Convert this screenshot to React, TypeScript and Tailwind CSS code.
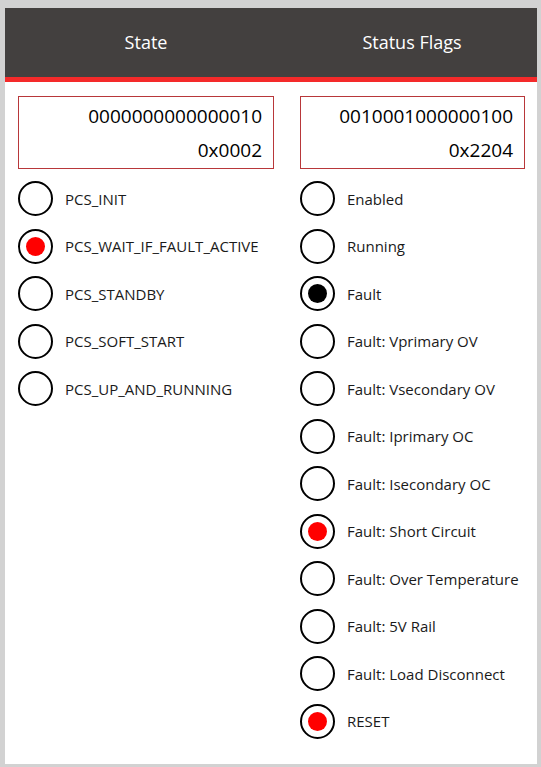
const stateItems = [
  { label: "PCS_INIT", on: false },
  { label: "PCS_WAIT_IF_FAULT_ACTIVE", on: true },
  { label: "PCS_STANDBY", on: false },
  { label: "PCS_SOFT_START", on: false },
  { label: "PCS_UP_AND_RUNNING", on: false },
];

const flagItems: { label: string; dot?: "red" | "black" }[] = [
  { label: "Enabled" },
  { label: "Running" },
  { label: "Fault", dot: "black" },
  { label: "Fault: Vprimary OV" },
  { label: "Fault: Vsecondary OV" },
  { label: "Fault: Iprimary OC" },
  { label: "Fault: Isecondary OC" },
  { label: "Fault: Short Circuit", dot: "red" },
  { label: "Fault: Over Temperature" },
  { label: "Fault: 5V Rail" },
  { label: "Fault: Load Disconnect" },
  { label: "RESET", dot: "red" },
];

const Radio = ({ dot }: { dot?: "red" | "black" }) => (
  <div className="w-[35px] h-[35px] rounded-full border-2 border-black flex items-center justify-center shrink-0 bg-white">
    {dot === "red" && <div className="w-[19px] h-[19px] rounded-full bg-[#ff0000]" />}
    {dot === "black" && <div className="w-[19px] h-[19px] rounded-full bg-black" />}
  </div>
);

const ValueBox = ({ bin, hex }: { bin: string; hex: string }) => (
  <div className="border border-[#b8373a] h-[73px] flex flex-col justify-between items-end pr-[11px] pt-[6px] pb-[5px] text-[19px] leading-[26px] text-black">
    <span>{bin}</span>
    <span>{hex}</span>
  </div>
);

const Row = ({ label, dot }: { label: string; dot?: "red" | "black" }) => (
  <div className="h-[47.5px] flex items-center gap-[12px]">
    <Radio dot={dot} />
    <span className="text-[15px] text-[#1a1a1a]">{label}</span>
  </div>
);

export default function App() {
  return (
    <div
      className="w-[541px] h-[767px] bg-[#d2d2d2] pl-[5px] pt-[8px] pr-[4px] pb-[3px]"
      style={{ fontFamily: '"Open Sans", "Noto Sans", sans-serif' }}
    >
      <div className="w-[532px] h-[756px] bg-white flex flex-col">
        {/* header */}
        <div className="h-[69px] bg-[#43403f] grid grid-cols-[282px_250px] items-center text-white text-[18px]">
          <div className="text-center">State</div>
          <div className="text-center">Status Flags</div>
        </div>
        <div className="h-[5px] bg-[#f42a2a]" />

        <div className="grid grid-cols-[282px_250px] pt-[14px]">
          {/* State column */}
          <div className="pl-[13px] pr-[13px]">
            <ValueBox bin="0000000000000010" hex="0x0002" />
            <div className="mt-[6px]">
              {stateItems.map((s) => (
                <Row key={s.label} label={s.label} dot={s.on ? "red" : undefined} />
              ))}
            </div>
          </div>

          {/* Status flags column */}
          <div className="pl-[13px] pr-[12px]">
            <ValueBox bin="0010001000000100" hex="0x2204" />
            <div className="mt-[6px]">
              {flagItems.map((f) => (
                <Row key={f.label} label={f.label} dot={f.dot} />
              ))}
            </div>
          </div>
        </div>
      </div>
    </div>
  );
}
